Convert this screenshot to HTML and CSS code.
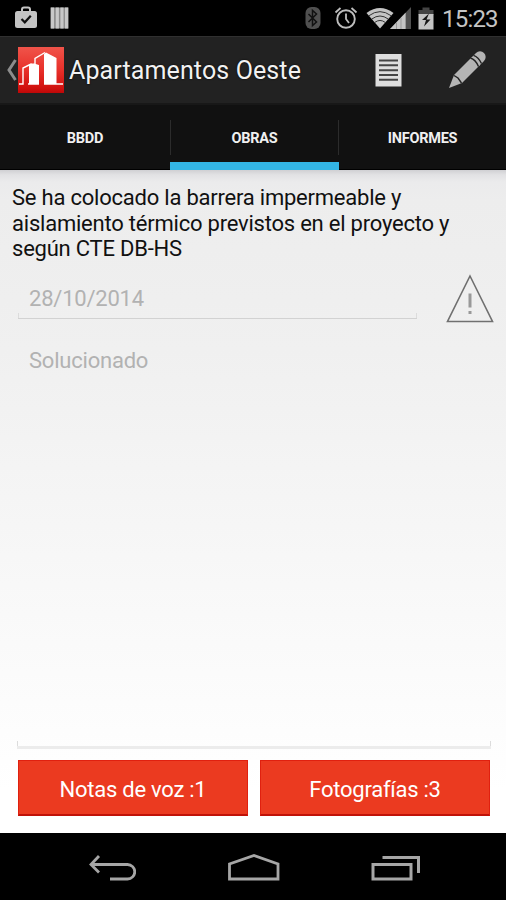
FILE: index.html
```html
<!DOCTYPE html>
<html lang="es">
<head>
    <meta charset="UTF-8">
    <meta name="viewport" content="width=device-width, initial-scale=1.0">
    <title>Apartamentos Oeste</title>
    <link rel="stylesheet" href="styles.css">
</head>
<body>
    <div class="status-bar">
        <div class="status-left">
            <svg width="24" height="24" viewBox="0 0 24 24">
                <path d="M8 5V3.500a2 2 0 0 1 2-2h4a2 2 0 0 1 2 2V5" fill="none" stroke="#c4c4c4" stroke-width="2"/>
                <rect x="1" y="5" width="22" height="17" rx="2.500" fill="#c4c4c4"/>
                <path d="M7.500 13l3.300 3.300 6-6.500" fill="none" stroke="#111" stroke-width="2.200"/>
            </svg>
            <svg width="19" height="24" viewBox="0 0 19 24">
                <rect x="0.500" y="1.500" width="18" height="21" fill="#888"/>
                <path d="M2.500 1.500v21M7.300 1.500v21M12 1.500v21M16.500 1.500v21" stroke="#c8c8c8" stroke-width="3.200"/>
            </svg>
        </div>
        <div class="status-right">
            <svg class="bluetooth" width="16" height="24" viewBox="0 0 16 24">
                <rect x="0.500" y="1" width="15" height="22" rx="6" fill="#505050"/>
                <path d="M3.500 8l8 8-4 3.500v-15l4 3.500-8 8" fill="none" stroke="#111" stroke-width="1.500"/>
            </svg>
            <svg class="alarm" width="24" height="24" viewBox="0 0 24 24">
                <circle cx="12" cy="13" r="8.800" fill="none" stroke="#bdbdbd" stroke-width="1.900"/>
                <path d="M12 7.500V13l3 4M1.500 6.500l5-4.500M22.500 6.500l-5-4.500" fill="none" stroke="#bdbdbd" stroke-width="1.800"/>
            </svg>
            <svg class="wifi" width="28" height="22" viewBox="0 0 28 22">
                <path d="M14 21.500L0.500 6Q14-4 27.500 6z" fill="#c4c4c4"/>
                <path d="M2.800 8.800Q14 0.500 25.200 8.800M5.800 12Q14 6 22.200 12M8.800 15.400Q14 11.500 19.200 15.400" fill="none" stroke="#333" stroke-width="1"/>
            </svg>
            <svg class="signal" width="21" height="22" viewBox="0 0 21 22">
                <path d="M21 0v22H0z" fill="#505050"/>
                <path d="M15.500 5.800V22H0z" fill="#c4c4c4"/>
                <path d="M6.500 15.500v6.500M11 11v11M15.500 6v16" stroke="#999" stroke-width="1"/>
            </svg>
            <svg class="battery" width="16" height="23" viewBox="0 0 16 23">
                <path d="M0.500 3H4.500V0.500h7V3h4v5h-15z" fill="#444"/>
                <path d="M0.500 7h15v15.500h-15z" fill="#c4c4c4"/>
                <path d="M11 6.500L4 13h4l-2 6.500 6.500-7H8.500z" fill="#161616"/>
            </svg>
            <span class="clock">15:23</span>
        </div>
    </div>

    <div class="action-bar">
        <svg class="up" width="11" height="22" viewBox="0 0 11 22">
            <path d="M9.500 1L3 11l6.500 10" fill="none" stroke="#8c8c8c" stroke-width="3"/>
        </svg>
        <svg class="logo" width="46" height="46" viewBox="0 0 46 46">
            <defs>
                <linearGradient id="red" x1="0" y1="0" x2="0" y2="1">
                    <stop offset="0" stop-color="#f0544a"/>
                    <stop offset="0.500" stop-color="#e8302a"/>
                    <stop offset="0.900" stop-color="#d0100e"/>
                    <stop offset="1" stop-color="#bd0808"/>
                </linearGradient>
            </defs>
            <rect width="46" height="46" fill="url(#red)"/>
            <path d="M11 18l5-1.500 5 1.500v19H11zM26 7l2-1.500L38.500 11v26H26z" fill="#fff"/>
            <path d="M1 37h4V21l8-4 5 1M10 37h11M17 37V11.500l10-6M26 37h19" fill="none" stroke="#fff" stroke-width="1.400"/>
        </svg>
        <h1>Apartamentos Oeste</h1>
        <svg class="list" width="27" height="33" viewBox="0 0 27 33">
            <rect width="26" height="32.500" x="0.500" fill="#dedede"/>
            <path d="M4 6.500h19M4 11.300h19M4 16.200h19M4 21h19M4 25.800h19" stroke="#444" stroke-width="2"/>
        </svg>
        <svg class="pencil" width="38" height="38" viewBox="0 0 38 38">
            <path d="M1 37L6 24 24 6l8 8L14 32z" fill="#b4b4b4"/>
            <path d="M25.500 4.500l2.500-2.500a5.500 5.500 0 0 1 8 8l-2.500 2.500zM23 7l3-3 8 8-3 3z" fill="#b4b4b4"/>
            <path d="M6 24.500l4 2.500 3.500 5M22.500 7q5 1.500 8 8.500M25.500 4.300q5 1.700 8 8.200" fill="none" stroke="#222" stroke-width="1.400"/>
        </svg>
    </div>

    <div class="tabs">
        <div class="tab"><span>BBDD</span></div>
        <div class="tab active"><span>OBRAS</span></div>
        <div class="tab"><span>INFORMES</span></div>
    </div>

    <div class="content">
        <p class="description">Se ha colocado la barrera impermeable y<br>aislamiento térmico previstos en el proyecto y<br>según CTE DB-HS</p>
        <div class="date-row">
            <div class="field date">28/10/2014</div>
            <svg width="48" height="50" viewBox="0 0 48 50">
                <path d="M24 2L46.500 47.500h-45z" fill="none" stroke="#707070" stroke-width="1.600"/>
                <path d="M24 19.500v14M24 37v3" stroke="#999" stroke-width="3"/>
            </svg>
        </div>
        <div class="field notes">Solucionado</div>
        <div class="buttons">
            <button>Notas de voz :1</button>
            <button>Fotografías :3</button>
        </div>
    </div>

    <div class="nav-bar">
        <svg width="48" height="28" viewBox="0 0 48 28">
            <path d="M11 2L3 10.500l8 8M3 10.500h36.500a7 7 0 0 1 0 14.500H22" fill="none" stroke="#a6a6a6" stroke-width="2.800"/>
        </svg>
        <svg width="54" height="28" viewBox="0 0 54 28">
            <path d="M2.500 25V10L27 1.500l24 8.500v15z" fill="none" stroke="#a6a6a6" stroke-width="2.800"/>
        </svg>
        <svg width="50" height="28" viewBox="0 0 50 28">
            <path d="M2 10.500h38v14.500H2zM11.500 3.500H47.500V19" fill="none" stroke="#a6a6a6" stroke-width="3"/>
        </svg>
    </div>
</body>
</html>
```
FILE: styles.css
```css
* {
    margin: 0;
    padding: 0;
    box-sizing: border-box;
    font-family: Roboto, sans-serif;
}

body {
    height: 900px;
    display: flex;
    flex-direction: column;
    background: #000;
    overflow: hidden;
}

svg {
    display: block;
    flex-shrink: 0;
}

.status-bar {
    height: 36px;
    padding: 0 8px 0 14px;
    display: flex;
    justify-content: space-between;
    align-items: center;
}

.status-left,
.status-right {
    display: flex;
    align-items: center;
}

.status-left {
    gap: 12px;
}

.alarm {
    margin-left: 13px;
}

.wifi {
    margin-left: 8px;
}

.signal {
    margin-left: -4px;
}

.battery {
    margin-left: 7px;
}

.clock {
    width: 56px;
    margin: 2px 0 0 8px;
    font-size: 24px;
    line-height: 36px;
    letter-spacing: -0.8px;
    color: #c4c4c4;
    white-space: nowrap;
}

.action-bar {
    height: 69px;
    padding: 0 20px 0 6px;
    display: flex;
    align-items: center;
    background: #222;
    border-top: 1px solid #303030;
    border-bottom: 2px solid #181818;
}

.logo {
    margin-left: 1px;
}

h1 {
    flex: 1;
    margin-left: 5px;
    font-size: 25px;
    font-weight: 400;
    letter-spacing: 0.12px;
    color: #f2f2f2;
    text-shadow: 0 0 2px #000;
    white-space: nowrap;
}

.pencil {
    margin-left: 46px;
}

.tabs {
    height: 65px;
    display: grid;
    grid-template-columns: 170px 169px 1fr;
    background: #111;
    border-bottom: 1px solid #000;
}

.tab {
    display: flex;
    align-items: center;
}

.tab span {
    flex: 1;
    height: 35px;
    line-height: 37px;
    text-align: center;
    font-size: 14.5px;
    font-weight: 700;
    letter-spacing: -0.25px;
    color: #f0f0f0;
}

.tab.active span {
    border-left: 1px solid #2c2c2c;
    border-right: 1px solid #2c2c2c;
}

.tab.active {
    height: 65px;
    padding-top: 7px;
    border-bottom: 8px solid #33b5e5;
}

.content {
    flex: 1;
    padding: 15px 12px 17px;
    display: flex;
    flex-direction: column;
    background: linear-gradient(#d0d0d3 0, #e2e2e4 5px, #ebebec 12px, #ededed 30px, #f0f0f0 180px, #fff 620px);
}

.description {
    font-size: 22px;
    line-height: 25.500px;
    letter-spacing: -0.22px;
    color: #111;
    white-space: nowrap;
}

.date-row {
    display: flex;
    justify-content: space-between;
    margin-top: 12px;
}

.field {
    margin-left: 6px;
    padding-left: 11px;
    font-size: 22px;
    letter-spacing: -0.22px;
    color: #b2b2b2;
    border-bottom: 1px solid #d2d2d2;
    /* short ticks at both ends of the underline */
    background:
        linear-gradient(#dcdcdc, #dcdcdc) left bottom / 1px 5px no-repeat,
        linear-gradient(#dcdcdc, #dcdcdc) right bottom / 1px 5px no-repeat;
}

.date {
    width: 399px;
    height: 45px;
    line-height: 50px;
}

.notes {
    flex: 1;
    margin: 0 3px 11px 5px;
    line-height: 26px;
    padding: 24px 0 0 12px;
    border-bottom: 3px solid #ececec;
}

.buttons {
    display: flex;
    gap: 12px;
    padding: 0 4px 0 6px;
}

button {
    flex: 1;
    height: 56px;
    padding-top: 3px;
    font-size: 22px;
    letter-spacing: -0.25px;
    color: #fff;
    background: #eb3a20;
    border: 1px solid #e0200f;
    border-bottom: 2px solid #c01208;
}

.nav-bar {
    height: 67px;
    padding: 3px 85px 0 88px;
    display: flex;
    justify-content: space-between;
    align-items: center;
    background: #000;
}
```
